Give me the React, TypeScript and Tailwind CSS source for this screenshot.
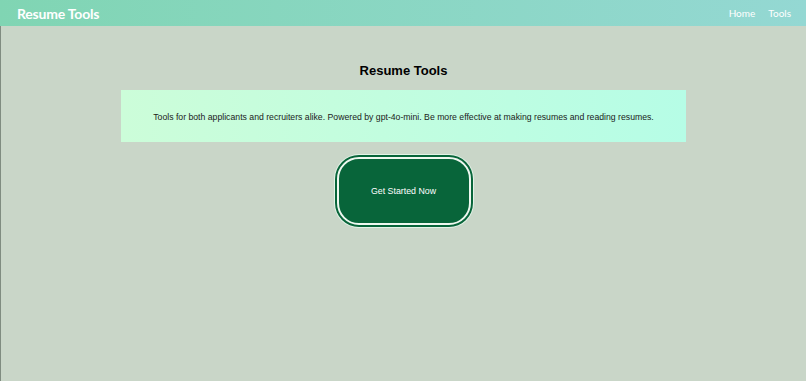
export default function App() {
  return (
    <div className="min-h-[381px] bg-[#c9d6c8] flex flex-col font-['Liberation_Sans',Arial,sans-serif]">
      {/* Navbar */}
      <nav className="h-[26px] flex items-center justify-between pl-[17px] pr-[15px] bg-gradient-to-r from-[#80d5b3] to-[#94d8d3]">
        <span className="text-white font-bold text-[14px] tracking-[-0.2px] font-['Lato','Noto_Sans',sans-serif]">
          Resume Tools
        </span>
        <div className="flex items-center gap-[13px] text-white text-[10px] font-['Lato','Noto_Sans',sans-serif]">
          <a href="#">Home</a>
          <a href="#">Tools</a>
        </div>
      </nav>

      {/* Main */}
      <main className="flex-1 flex flex-col items-center border-l border-[#7f8c80]">
        <h1 className="mt-[37px] text-[13px] font-bold text-black leading-[16px]">
          Resume Tools
        </h1>
        <div className="mt-[11px] w-[565px] h-[52px] pt-[3px] flex items-center justify-center bg-gradient-to-r from-[#ccfdd9] to-[#b6fde6]">
          <p className="text-[8.7px] text-[#1b1b1b]">
            Tools for both applicants and recruiters alike. Powered by gpt-4o-mini. Be more effective at making resumes and reading resumes.
          </p>
        </div>
        <button className="mt-[15px] w-[134px] h-[68px] rounded-[22px] bg-[#08653a] border-2 border-[#eef8f0] text-white text-[8.8px] pt-[2px] shadow-[0_0_0_2px_#08653a,0_0_0_3px_#e3f3e7]">
          Get Started Now
        </button>
      </main>
    </div>
  );
}
